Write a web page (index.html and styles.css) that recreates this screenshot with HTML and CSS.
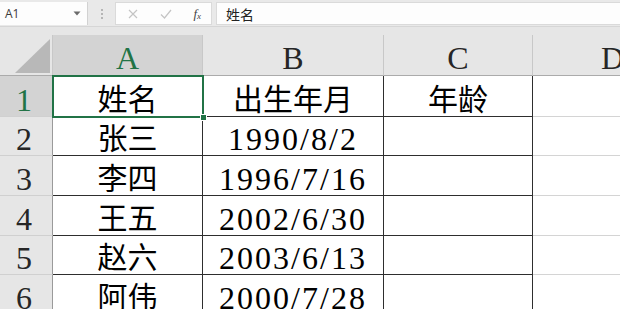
FILE: index.html
```html
<!DOCTYPE html>
<html lang="zh">
<head>
<meta charset="utf-8">
<link rel="stylesheet" href="styles.css">
</head>
<body>
<div class="toolbar">
  <div class="namebox">
    <span class="nb-text">A1</span>
    <svg class="nb-arrow" width="8" height="5" viewBox="0 0 8 5"><path d="M0.5 0.5 L7.5 0.5 L4 4.5 Z" fill="#6b6b6b"/></svg>
  </div>
  <div class="dots"><i></i><i></i><i></i></div>
  <div class="fbtns">
    <svg width="10" height="10" viewBox="0 0 10 10"><path d="M1 1 L9 9 M9 1 L1 9" stroke="#c4c4c4" stroke-width="1.2" fill="none"/></svg>
    <svg width="12" height="10" viewBox="0 0 12 10"><path d="M1 5.5 L4.5 9 L11 1" stroke="#c4c4c4" stroke-width="1.2" fill="none"/></svg>
    <span class="fx">f<sub>x</sub></span>
  </div>
  <div class="fcontent">姓名</div>
</div>
<div class="band"></div>
<div class="sheet">
  <div class="corner"><svg width="53" height="41" viewBox="0 0 53 41"><path d="M50 4 L50 38 L15 38 Z" fill="#b8b8b8"/></svg></div>
  <div class="ch sel">A</div>
  <div class="ch">B</div>
  <div class="ch">C</div>
  <div class="ch">D</div>

  <div class="rh sel">1</div>
  <div class="c cjk">姓名</div>
  <div class="c cjk">出生年月</div>
  <div class="c cjk">年龄</div>
  <div class="e"></div>

  <div class="rh">2</div>
  <div class="c cjk">张三</div>
  <div class="c num">1990/8/2</div>
  <div class="c"></div>
  <div class="e"></div>

  <div class="rh">3</div>
  <div class="c cjk">李四</div>
  <div class="c num">1996/7/16</div>
  <div class="c"></div>
  <div class="e"></div>

  <div class="rh">4</div>
  <div class="c cjk">王五</div>
  <div class="c num">2002/6/30</div>
  <div class="c"></div>
  <div class="e"></div>

  <div class="rh">5</div>
  <div class="c cjk">赵六</div>
  <div class="c num">2003/6/13</div>
  <div class="c"></div>
  <div class="e"></div>

  <div class="rh">6</div>
  <div class="c cjk">阿伟</div>
  <div class="c num">2000/7/28</div>
  <div class="c"></div>
  <div class="e"></div>

  <div class="selection"><span class="handle"></span></div>
</div>
</body>
</html>
```

FILE: styles.css
```css
* { box-sizing: border-box; }
html, body { margin: 0; padding: 0; }
body {
  width: 620px;
  height: 309px;
  overflow: hidden;
  background: #e6e6e6;
  font-family: "Liberation Serif", "Noto Sans CJK SC", serif;
}
.toolbar {
  height: 27px;
  display: flex;
  align-items: stretch;
  padding-top: 2px;
  padding-bottom: 1px;
  background: #e9e9e9;
  border-bottom: 1px solid #d6d6d6;
}
.namebox {
  width: 88px;
  background: #fdfdfd;
  display: flex;
  align-items: center;
  justify-content: space-between;
  padding: 0 6px 0 5px;
  border-right: 1px solid #d2d2d2;
}
.nb-text {
  font-family: "Open Sans", "Liberation Sans", sans-serif;
  font-size: 12px;
  color: #3b3b3b;
}
.dots {
  width: 27px;
  display: flex;
  flex-direction: column;
  align-items: center;
  justify-content: center;
  gap: 2px;
}
.dots i {
  display: block;
  width: 2px;
  height: 2px;
  background: #b5b5b5;
}
.fbtns {
  width: 97px;
  background: #fdfdfd;
  display: flex;
  align-items: center;
  padding: 0 10px 0 12px;
  justify-content: space-between;
  border: 1px solid #dadada;
}
.fx {
  font-family: "Liberation Serif", serif;
  font-style: italic;
  font-size: 13px;
  color: #444;
  line-height: 1;
}
.fx sub { font-size: 9px; vertical-align: -1px; }
.fcontent {
  flex: 1;
  margin-left: 4px;
  background: #fdfdfd;
  border: 1px solid #dadada;
  border-right: none;
  display: flex;
  align-items: center;
  padding-left: 9px;
  font-family: "Noto Sans CJK SC", sans-serif;
  font-size: 14px;
  color: #222;
}
.band { height: 8px; background: #e6e6e6; }
.sheet {
  position: relative;
  display: grid;
  grid-template-columns: 53px 150px 181px 149px 160px;
  grid-template-rows: 41px 41px 39px 40px 40px 39px 40px;
  background: #fff;
  width: 693px;
}
.corner {
  background: #e6e6e6;
  border-right: 1px solid #c8c8c8;
  border-bottom: 1px solid #ababab;
}
.corner svg { display: block; }
.ch {
  background: #e6e6e6;
  border-right: 1px solid #c8c8c8;
  border-bottom: 1px solid #ababab;
  display: flex;
  justify-content: center;
  align-items: flex-end;
  font-size: 32px;
  line-height: 32px;
  padding-bottom: 1px;
  color: #262626;
}
.ch.sel, .rh.sel { background: #d3d3d3; color: #217346; }
.rh {
  background: #e6e6e6;
  border-right: 1px solid #9a9a9a;
  border-bottom: 1px solid #d0d0d0;
  display: flex;
  justify-content: center;
  align-items: flex-end;
  font-size: 32px;
  line-height: 32px;
  padding-bottom: 0;
  padding-right: 4px;
  color: #262626;
}
.c {
  border-right: 1px solid #2e2e2e;
  border-bottom: 1px solid #2e2e2e;
  display: flex;
  justify-content: center;
  align-items: flex-end;
  color: #000;
}
.e {
  border-bottom: 1px solid #d4d4d4;
}
.cjk {
  font-family: "Noto Sans CJK SC", sans-serif;
  font-size: 30px;
  line-height: 30px;
  padding-bottom: 4px;
}
.num {
  font-size: 32px;
  line-height: 32px;
  letter-spacing: 2px;
  padding-bottom: 0;
}
.selection {
  position: absolute;
  left: 52px;
  top: 40px;
  width: 152px;
  height: 43px;
  border: 2px solid #217346;
  pointer-events: none;
}
.handle {
  position: absolute;
  right: -5px;
  bottom: -5px;
  width: 7px;
  height: 7px;
  background: #217346;
  border: 1px solid #fff;
}
```
